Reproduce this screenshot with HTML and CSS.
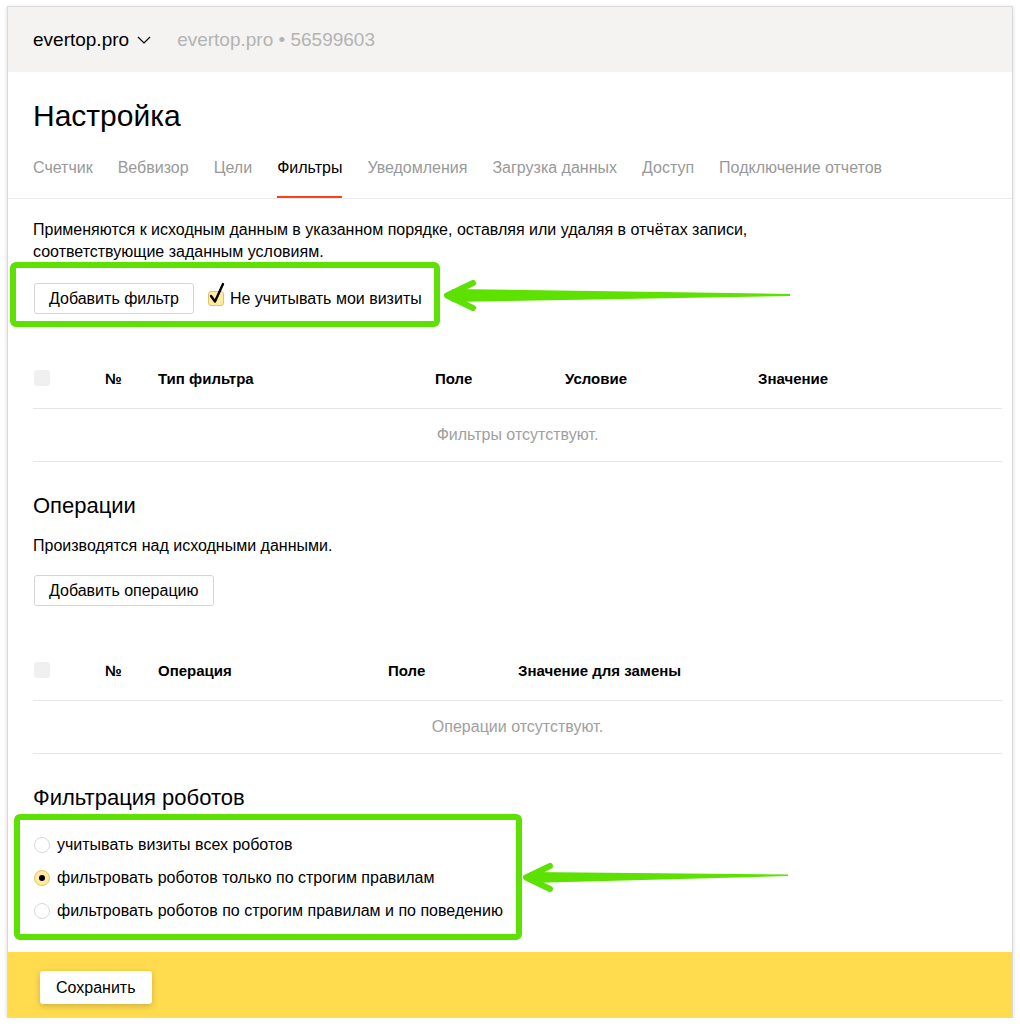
FILE: index.html
```html
<!DOCTYPE html>
<html lang="ru">
<head>
    <meta charset="UTF-8">
    <title>Настройка — Фильтры</title>
    <link rel="stylesheet" href="styles.css">
</head>
<body>
    <div class="window">
        <header class="topbar">
            <span class="site">evertop.pro
                <svg class="chevron" width="14" height="8" viewBox="0 0 14 8"><path d="M1 1 L7 7 L13 1" fill="none" stroke="#000" stroke-width="1.2"/></svg>
            </span>
            <span class="counter">evertop.pro • 56599603</span>
        </header>

        <div class="page-head">
            <h1>Настройка</h1>
            <nav class="tabs">
                <a>Счетчик</a>
                <a>Вебвизор</a>
                <a>Цели</a>
                <a class="active">Фильтры</a>
                <a>Уведомления</a>
                <a>Загрузка данных</a>
                <a>Доступ</a>
                <a>Подключение отчетов</a>
            </nav>
        </div>

        <section class="section first">
            <p class="desc">Применяются к исходным данным в указанном порядке, оставляя или удаляя в отчётах записи,<br>соответствующие заданным условиям.</p>
            <div class="actions">
                <button class="btn">Добавить фильтр</button>
                <label class="check">
                    <span class="check-box">
                        <svg width="20" height="24" viewBox="0 0 20 24"><path d="M3 15 L7 20.5 L15 3" fill="none" stroke="#000" stroke-width="2.4" stroke-linecap="round" stroke-linejoin="round"/></svg>
                    </span>
                    Не учитывать мои визиты
                </label>
            </div>

            <div class="grid filters">
                <div class="grid-head">
                    <span class="cb"></span>
                    <span>№</span>
                    <span>Тип фильтра</span>
                    <span>Поле</span>
                    <span>Условие</span>
                    <span>Значение</span>
                </div>
                <div class="grid-empty">Фильтры отсутствуют.</div>
            </div>
        </section>

        <section class="section">
            <h2>Операции</h2>
            <p class="desc small">Производятся над исходными данными.</p>
            <button class="btn">Добавить операцию</button>

            <div class="grid operations">
                <div class="grid-head">
                    <span class="cb"></span>
                    <span>№</span>
                    <span>Операция</span>
                    <span>Поле</span>
                    <span>Значение для замены</span>
                </div>
                <div class="grid-empty">Операции отсутствуют.</div>
            </div>
        </section>

        <section class="section">
            <h2>Фильтрация роботов</h2>
            <div class="radios">
                <label class="radio"><span class="dot"></span>учитывать визиты всех роботов</label>
                <label class="radio checked"><span class="dot"></span>фильтровать роботов только по строгим правилам</label>
                <label class="radio"><span class="dot"></span>фильтровать роботов по строгим правилам и по поведению</label>
            </div>
        </section>

        <footer class="savebar">
            <button class="btn save">Сохранить</button>
        </footer>
    </div>

    <!-- annotation layer -->
    <svg class="marks" width="1020" height="1024" viewBox="0 0 1020 1024">
        <rect x="13" y="265" width="424" height="59" rx="3" fill="none" stroke="#5ce100" stroke-width="6"/>
        <rect x="17" y="817" width="502" height="120" rx="3" fill="none" stroke="#5ce100" stroke-width="6"/>

        <path d="M452 289 L790 294 L790 296 L452 302 Z" fill="#5ce100"/>
        <path d="M473 283 L447 295.5 L473 308" fill="none" stroke="#5ce100" stroke-width="6" stroke-linecap="round" stroke-linejoin="round"/>

        <path d="M530 872 L788 874.5 L788 876 L530 883 Z" fill="#5ce100"/>
        <path d="M550 866 L526 877.5 L550 889" fill="none" stroke="#5ce100" stroke-width="6" stroke-linecap="round" stroke-linejoin="round"/>
    </svg>
</body>
</html>
```

FILE: styles.css
```css
body {
    margin: 0;
    background-color: #fff;
    font-family: 'Liberation Sans', Arial, sans-serif;
    color: #000;
    position: relative;
}
.window {
    box-sizing: border-box;
    width: 1006px;
    height: 1012px;
    margin: 6px 0 0 7px;
    border: 1px solid #d9d9d9;
    box-shadow: 0 1px 4px rgba(0, 0, 0, 0.15);
    display: flex;
    flex-direction: column;
    overflow: hidden;
}
.topbar {
    height: 65px;
    background-color: #f4f3f2;
    display: flex;
    align-items: center;
    padding-left: 25px;
    font-size: 19px;
    flex-shrink: 0;
}
.site {
    display: flex;
    align-items: center;
    gap: 8px;
}
.chevron {
    margin-top: 1px;
}
.counter {
    color: #b3b3b3;
    margin-left: 26px;
}
.page-head {
    padding: 0 25px;
    border-bottom: 1px solid #ebebeb;
}
h1 {
    margin: 27px 0 0;
    font-size: 30px;
    font-weight: 400;
    line-height: 34px;
}
.tabs {
    display: flex;
    gap: 25px;
    margin-top: 21px;
    font-size: 16px;
    line-height: 20px;
}
.tabs a {
    color: #999;
    padding: 4px 0 18px;
    border-bottom: 2px solid transparent;
}
.tabs a.active {
    color: #000;
    border-bottom-color: #fc3f1d;
}
.section {
    padding: 0 10px 0 25px;
}
.section.first {
    padding-top: 20px;
}
.desc {
    margin: 0;
    font-size: 16px;
    line-height: 22px;
}
.desc.small {
    margin-top: 17px;
}
.actions {
    display: flex;
    align-items: center;
    gap: 14px;
    margin-top: 20px;
}
.btn {
    font-family: inherit;
    font-size: 16px;
    color: #000;
    background-color: #fff;
    border: 1px solid #d5d5d5;
    border-radius: 3px;
    height: 31px;
    padding: 0 14px;
    margin-left: 1px;
}
.section > .btn {
    margin-top: 18px;
}
.check {
    display: flex;
    align-items: center;
    gap: 6px;
    font-size: 16px;
}
.check-box {
    width: 16px;
    height: 15px;
    background-color: #ffeba0;
    border: 1px solid #e0c36a;
    border-radius: 3px;
    position: relative;
    box-sizing: border-box;
}
.check-box svg {
    position: absolute;
    left: -1px;
    top: -11px;
}
.grid {
    margin-top: 36px;
}
.grid-head {
    display: grid;
    height: 59px;
    padding-bottom: 2px;
    box-sizing: border-box;
    align-items: center;
    border-bottom: 1px solid #e6e6e6;
    font-size: 15px;
    font-weight: 700;
}
.filters .grid-head {
    grid-template-columns: 72px 53px 277px 130px 193px 1fr;
}
.operations .grid-head {
    grid-template-columns: 72px 53px 230px 130px 1fr;
}
.cb {
    width: 16px;
    height: 16px;
    background-color: #f0f0f0;
    border-radius: 3px;
    margin-left: 1px;
}
.grid-empty {
    height: 52px;
    line-height: 52px;
    text-align: center;
    color: #a0a0a0;
    font-size: 16px;
    border-bottom: 1px solid #e6e6e6;
}
h2 {
    margin: 32px 0 0;
    font-size: 22px;
    font-weight: 400;
    line-height: 24px;
}
.radios {
    margin-top: 18px;
}
.radio {
    display: flex;
    align-items: center;
    gap: 7px;
    height: 33px;
    font-size: 16px;
}
.dot {
    width: 16px;
    height: 16px;
    box-sizing: border-box;
    border-radius: 50%;
    border: 1px solid #d9d9d9;
    background-color: #fff;
    margin-left: 1px;
    display: flex;
    align-items: center;
    justify-content: center;
}
.radio.checked .dot {
    background-color: #ffeba0;
    border-color: #e0c36a;
}
.radio.checked .dot::after {
    content: "";
    width: 6px;
    height: 6px;
    border-radius: 50%;
    background-color: #000;
}
.savebar {
    margin-top: auto;
    height: 65px;
    background-color: #ffdb4d;
    padding: 19px 0 0 32px;
    box-sizing: border-box;
    flex-shrink: 0;
}
.btn.save {
    height: 33px;
    padding: 0 16px;
    border: none;
    box-shadow: 0 2px 6px rgba(0, 0, 0, 0.2);
    margin: 0;
}
.marks {
    position: absolute;
    left: 0;
    top: 0;
    pointer-events: none;
}
```
